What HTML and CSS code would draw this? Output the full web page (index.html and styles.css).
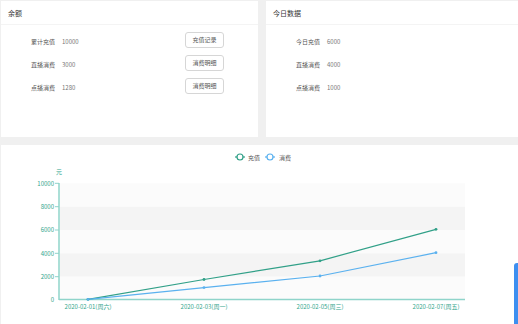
FILE: index.html
```html
<!DOCTYPE html>
<html>
  <head>
    <meta http-equiv="Content-type" content="text/html; charset=utf-8" />
    <meta name="viewport" content="width=device-width, initial-scale=1" />
    <title>账户概览</title>
    <link rel="stylesheet" href="styles.css">
  </head>
  <body>
    <div class="page">
      <div class="top">
        <div class="card">
          <div class="card-head">余额</div>
          <div class="stat-list">
            <div class="row">
              <div class="label">累计充值</div>
              <div class="value">10000</div>
              <button>充值记录</button>
            </div>
            <div class="row">
              <div class="label">直播消费</div>
              <div class="value">3000</div>
              <button>消费明细</button>
            </div>
            <div class="row">
              <div class="label">点播消费</div>
              <div class="value">1280</div>
              <button>消费明细</button>
            </div>
          </div>
        </div>
        <div class="card">
          <div class="card-head">今日数据</div>
          <div class="stat-list">
            <div class="row">
              <div class="label">今日充值</div>
              <div class="value">6000</div>
            </div>
            <div class="row">
              <div class="label">直播消费</div>
              <div class="value">4000</div>
            </div>
            <div class="row">
              <div class="label">点播消费</div>
              <div class="value">1000</div>
            </div>
          </div>
        </div>
      </div>
      <div class="card chart-card">
        <svg class="chart" width="518" height="179" viewBox="1 145 518 179">
          <!-- legend -->
          <g class="legend">
            <line x1="235" y1="157" x2="245" y2="157" stroke="#31a088" stroke-width="1.2" />
            <circle cx="240" cy="157" r="3" fill="#fff" stroke="#31a088" stroke-width="1.2" />
            <text x="248" y="159.5">充值</text>
            <line x1="265" y1="157" x2="275" y2="157" stroke="#5ab1ef" stroke-width="1.2" />
            <circle cx="270" cy="157" r="3" fill="#fff" stroke="#5ab1ef" stroke-width="1.2" />
            <text x="279" y="159.5">消费</text>
          </g>
          <!-- split areas -->
          <rect x="60" y="183.3" width="405" height="23.4" fill="#fbfbfb" />
          <rect x="60" y="206.7" width="405" height="23.3" fill="#f4f4f4" />
          <rect x="60" y="230" width="405" height="23.3" fill="#fbfbfb" />
          <rect x="60" y="253.3" width="405" height="23.4" fill="#f4f4f4" />
          <rect x="60" y="276.7" width="405" height="22.6" fill="#fbfbfb" />
          <!-- y axis -->
          <text class="axis-name" x="59" y="174" text-anchor="middle">元</text>
          <line x1="59" y1="183" x2="59" y2="300" stroke="#8fd4ca" stroke-width="1.5" />
          <g stroke="#8fd4ca" stroke-width="1">
            <line x1="55" y1="183.3" x2="59" y2="183.3" />
            <line x1="55" y1="206.7" x2="59" y2="206.7" />
            <line x1="55" y1="230" x2="59" y2="230" />
            <line x1="55" y1="253.3" x2="59" y2="253.3" />
            <line x1="55" y1="276.7" x2="59" y2="276.7" />
          </g>
          <g class="axis-label" text-anchor="end">
            <text x="54" y="185.5">10000</text>
            <text x="54" y="209">8000</text>
            <text x="54" y="232.3">6000</text>
            <text x="54" y="255.6">4000</text>
            <text x="54" y="279">2000</text>
            <text x="54" y="301.6">0</text>
          </g>
          <!-- x axis -->
          <line x1="59" y1="299.5" x2="465" y2="299.5" stroke="#8fd4ca" stroke-width="1.5" />
          <g class="axis-label" text-anchor="middle">
            <text x="88" y="308.5">2020-02-01(周六)</text>
            <text x="204" y="308.5">2020-02-03(周一)</text>
            <text x="320" y="308.5">2020-02-05(周三)</text>
            <text x="436" y="308.5">2020-02-07(周五)</text>
          </g>
          <!-- series -->
          <polyline points="88,299.3 204,279.5 320,260.8 436,229.3" fill="none" stroke="#31a088" stroke-width="1.2" />
          <polyline points="88,299.3 204,287.6 320,276 436,252.7" fill="none" stroke="#5ab1ef" stroke-width="1.2" />
          <g fill="#31a088">
            <circle cx="88" cy="299.3" r="1.4" />
            <circle cx="204" cy="279.5" r="1.4" />
            <circle cx="320" cy="260.8" r="1.4" />
            <circle cx="436" cy="229.3" r="1.4" />
          </g>
          <g fill="#5ab1ef">
            <circle cx="88" cy="299.3" r="1.4" />
            <circle cx="204" cy="287.6" r="1.4" />
            <circle cx="320" cy="276" r="1.4" />
            <circle cx="436" cy="252.7" r="1.4" />
          </g>
        </svg>
      </div>
    </div>
    <div class="side-tab"></div>
  </body>
</html>
```

FILE: styles.css
```css
body {
  margin: 0;
  background-color: #f0f0f0;
  font-family: "Noto Sans CJK SC", "Noto Sans", sans-serif;
  color: #666;
  overflow: hidden;
}
.page {
  width: 524px;
  padding: 1px;
  display: flex;
  flex-direction: column;
  gap: 8px;
}
.top {
  display: grid;
  grid-template-columns: 257px 257px;
  gap: 8px;
}
.card {
  background-color: #fff;
}
.top .card {
  height: 136px;
}
.card-head {
  height: 23px;
  line-height: 24px;
  padding-left: 7px;
  font-size: 7px;
  color: #333;
  border-bottom: 1px solid #f4f4f4;
}
.stat-list {
  padding-top: 5px;
}
.row {
  display: flex;
  align-items: center;
  height: 23px;
  font-size: 6px;
  padding-right: 34px;
}
.label {
  width: 54px;
  text-align: right;
  color: #555;
}
.value {
  margin-left: 7px;
  color: #777;
}
button {
  margin-left: auto;
  margin-bottom: 4px;
  width: 39px;
  height: 16px;
  padding: 0;
  border: 1px solid #d6d6d6;
  border-radius: 3px;
  background-color: #fff;
  color: #555;
  font-family: inherit;
  font-size: 6px;
}
.chart-card {
  height: 179px;
}
.chart {
  display: block;
}
.chart text {
  font-family: "Noto Sans CJK SC", "Noto Sans", sans-serif;
  font-size: 6px;
}
.legend text {
  fill: #555;
}
.axis-label text,
.axis-name {
  fill: #2fa58c;
}
.side-tab {
  position: fixed;
  right: 0;
  top: 263px;
  width: 4px;
  height: 70px;
  background-color: #3d8ff0;
  border-top-left-radius: 3px;
}
```
